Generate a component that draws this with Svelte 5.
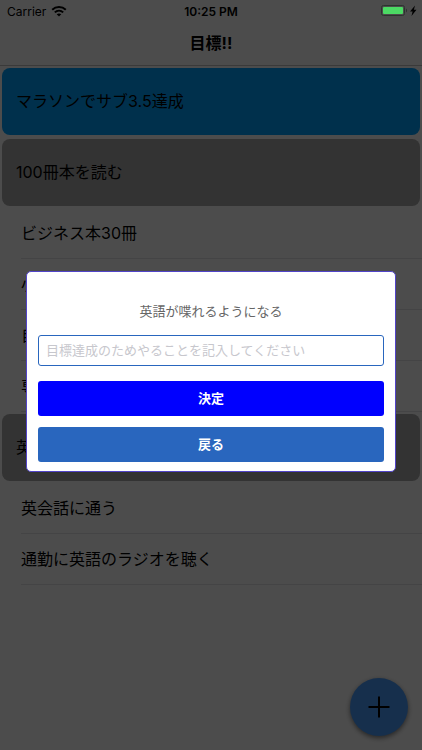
<script>
  let newTask = $state("");

  const goals = [
    { title: "マラソンでサブ3.5達成", active: true, tasks: [] },
    { title: "100冊本を読む", tasks: ["ビジネス本30冊", "小説", "自伝", "専門書"] },
    { title: "英語が喋れるようになる", tasks: ["英会話に通う", "通勤に英語のラジオを聴く"] },
  ];
</script>

<div class="app">
  <header>
    <div class="status">
      <div class="carrier">
        <span>Carrier</span>
        <svg width="16" height="12" viewBox="0 0 16 12" fill="none" stroke="#000" stroke-width="2">
          <path d="M1.2 4.8C5 1.1 11 1.1 14.8 4.8" />
          <path d="M3.8 7.4C6.2 5.1 9.8 5.1 12.2 7.4" />
          <path d="M5.7 9.3C7 8.1 9 8.1 10.3 9.3L8 11.6z" fill="#000" stroke="none" />
        </svg>
      </div>
      <span class="time">10:25 PM</span>
    </div>
    <h1>目標!!</h1>
  </header>

  <main>
    {#each goals as goal}
      <section>
        <h2 class:active={goal.active}>{goal.title}</h2>
        {#if goal.tasks.length}
          <ul>
            {#each goal.tasks as task}
              <li>{task}</li>
            {/each}
          </ul>
        {/if}
      </section>
    {/each}
  </main>

  <button class="add" aria-label="追加">
    <svg width="22" height="22" viewBox="0 0 22 22" stroke="#000" stroke-width="2">
      <path d="M11 0.5V21.5M0.5 11H21.5" />
    </svg>
  </button>
</div>

<div class="overlay">
  <form class="modal" onsubmit={(e) => e.preventDefault()}>
    <label for="task">英語が喋れるようになる</label>
    <input id="task" type="text" placeholder="目標達成のためやることを記入してください" bind:value={newTask} />
    <button type="submit" class="submit">決定</button>
    <button type="button" class="back">戻る</button>
  </form>
</div>

<!-- the battery stays bright above the dimmed screen -->
<svg class="battery" width="38" height="12" viewBox="0 0 38 12">
  <rect x="0.5" y="0.5" width="23" height="10" rx="2" fill="none" stroke="#2c332e" />
  <rect x="2" y="2" width="20" height="7" rx="1" fill="#4cd964" />
  <path d="M25 3.5c1.4.5 1.4 3.5 0 4z" fill="#2c332e" />
  <path d="M34 0.5L29 6.5h2.6L30.5 11L35.500 4.700h-2.600z" fill="#000" />
</svg>

<style>
  :global(body) {
    margin: 0;
    background: #fff;
    font-family: Inter, "Noto Sans CJK JP", sans-serif;
    color: #000;
  }

  header {
    border-bottom: 1px solid #c4c4c4;
  }

  .status {
    display: grid;
    grid-template-columns: 1fr auto 1fr;
    align-items: center;
    height: 22px;
    padding: 0 7px;
    font-size: 12px;
  }

  .carrier {
    display: flex;
    align-items: center;
    gap: 5px;
  }

  .time {
    font-weight: 600;
  }

  h1 {
    margin: 0;
    font-size: 16px;
    line-height: 43px;
    font-weight: 700;
    text-align: center;
  }

  h2 {
    margin: 0 2px;
    padding: 0 14px;
    border-radius: 8px;
    background: #aaa;
    font-size: 16px;
    line-height: 67px;
    font-weight: 400;
  }

  h2.active {
    background: #00a0ff;
  }

  section {
    padding: 2px 0;
  }

  ul {
    margin: 2px 0 -2px;
    padding: 0 0 0 21px;
    list-style: none;
  }

  li {
    border-bottom: 1px solid #e4e4e8;
    font-size: 16px;
    line-height: 50px;
  }

  .add {
    position: fixed;
    right: 14px;
    bottom: 14px;
    display: flex;
    align-items: center;
    justify-content: center;
    width: 58px;
    height: 58px;
    padding: 0;
    border: 0;
    border-radius: 50%;
    background: #4a9eff;
    box-shadow: 0 2px 5px rgba(0, 0, 0, 0.5);
  }

  .overlay {
    position: fixed;
    inset: 0;
    display: flex;
    align-items: center;
    justify-content: center;
    padding: 0 26px 7px;
    background: rgba(0, 0, 0, 0.7);
  }

  .modal {
    display: flex;
    flex: 1;
    flex-direction: column;
    padding: 29px 11px 9px;
    border: 1px solid #5244c8;
    border-radius: 5px;
    background: #fff;
  }

  .modal label {
    margin-bottom: 14px;
    font-size: 13px;
    line-height: 20px;
    text-align: center;
    color: #666;
  }

  .modal input {
    box-sizing: border-box;
    width: 100%;
    height: 31px;
    margin-bottom: 15px;
    padding: 0 7px 2px;
    border: 1px solid #2966be;
    border-radius: 3px;
    background: #fff;
    font: inherit;
    font-size: 13px;
  }

  .modal input::placeholder {
    color: #c7c7cd;
  }

  .modal button {
    height: 35px;
    padding: 0 0 2px;
    border: 0;
    border-radius: 3px;
    background: #2966be;
    color: #fff;
    font: inherit;
    font-size: 13px;
    font-weight: 700;
  }

  .modal .submit {
    margin-bottom: 11px;
    background: #00f;
  }

  .battery {
    position: fixed;
    top: 5px;
    right: 3px;
  }
</style>
